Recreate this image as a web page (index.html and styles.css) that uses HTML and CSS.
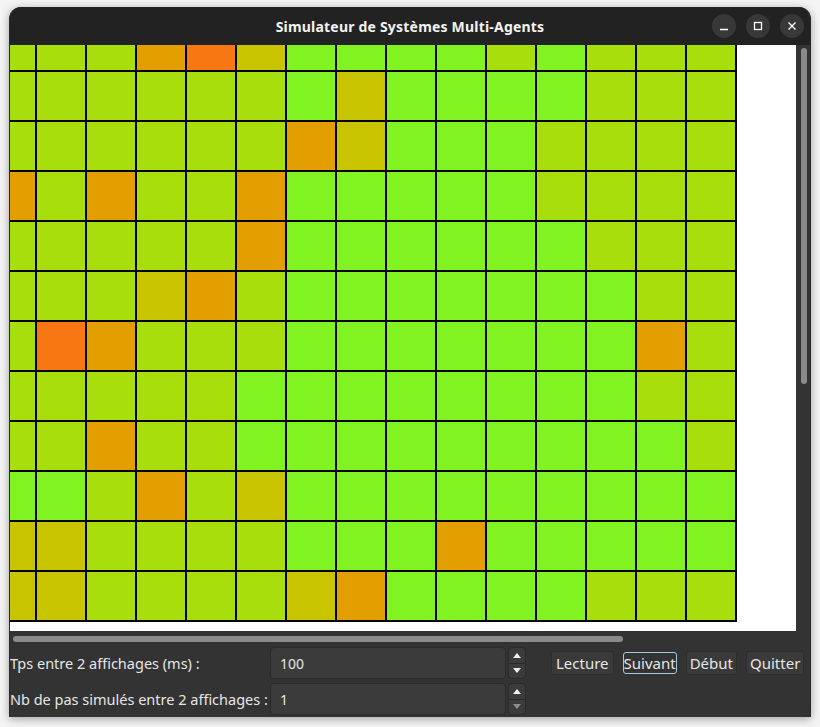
FILE: index.html
```html
<!DOCTYPE html>
<html lang="fr">
<head>
<meta charset="utf-8">
<title>Simulateur de Systèmes Multi-Agents</title>
<link rel="stylesheet" href="styles.css">
</head>
<body>
<div class="window">
  <header class="titlebar">
    <span></span>
    <span class="title">Simulateur de Systèmes Multi-Agents</span>
    <div class="wctrls">
      <span class="wbtn"><svg width="12" height="12" viewBox="0 0 12 12"><path d="M2 9.5h8" stroke="#fff" stroke-width="1.3"/></svg></span>
      <span class="wbtn"><svg width="12" height="12" viewBox="0 0 12 12"><rect x="2.5" y="2.5" width="7" height="7" fill="none" stroke="#fff" stroke-width="1.3"/></svg></span>
      <span class="wbtn"><svg width="12" height="12" viewBox="0 0 12 12"><path d="M2.5 2.5l7 7M9.5 2.5l-7 7" stroke="#fff" stroke-width="1.3"/></svg></span>
    </div>
  </header>
  <div class="main">
    <div class="viewport">
      <div class="board">
        <i class="a"></i><i class="a"></i><i class="a"></i><i class="o"></i><i class="r"></i><i class="y"></i><i class="g"></i><i class="g"></i><i class="g"></i><i class="g"></i><i class="a"></i><i class="g"></i><i class="a"></i><i class="a"></i><i class="a"></i>
        <i class="a"></i><i class="a"></i><i class="a"></i><i class="a"></i><i class="a"></i><i class="a"></i><i class="g"></i><i class="y"></i><i class="g"></i><i class="g"></i><i class="g"></i><i class="g"></i><i class="a"></i><i class="a"></i><i class="a"></i>
        <i class="a"></i><i class="a"></i><i class="a"></i><i class="a"></i><i class="a"></i><i class="a"></i><i class="o"></i><i class="y"></i><i class="g"></i><i class="g"></i><i class="g"></i><i class="a"></i><i class="a"></i><i class="a"></i><i class="a"></i>
        <i class="o"></i><i class="a"></i><i class="o"></i><i class="a"></i><i class="a"></i><i class="o"></i><i class="g"></i><i class="g"></i><i class="g"></i><i class="g"></i><i class="g"></i><i class="a"></i><i class="a"></i><i class="a"></i><i class="a"></i>
        <i class="a"></i><i class="a"></i><i class="a"></i><i class="a"></i><i class="a"></i><i class="o"></i><i class="g"></i><i class="g"></i><i class="g"></i><i class="g"></i><i class="g"></i><i class="g"></i><i class="a"></i><i class="a"></i><i class="a"></i>
        <i class="a"></i><i class="a"></i><i class="a"></i><i class="y"></i><i class="o"></i><i class="a"></i><i class="g"></i><i class="g"></i><i class="g"></i><i class="g"></i><i class="g"></i><i class="g"></i><i class="g"></i><i class="a"></i><i class="a"></i>
        <i class="a"></i><i class="r"></i><i class="o"></i><i class="a"></i><i class="a"></i><i class="a"></i><i class="g"></i><i class="g"></i><i class="g"></i><i class="g"></i><i class="g"></i><i class="g"></i><i class="g"></i><i class="o"></i><i class="a"></i>
        <i class="a"></i><i class="a"></i><i class="a"></i><i class="a"></i><i class="a"></i><i class="g"></i><i class="g"></i><i class="g"></i><i class="g"></i><i class="g"></i><i class="g"></i><i class="g"></i><i class="g"></i><i class="a"></i><i class="a"></i>
        <i class="a"></i><i class="a"></i><i class="o"></i><i class="a"></i><i class="a"></i><i class="g"></i><i class="g"></i><i class="g"></i><i class="g"></i><i class="g"></i><i class="g"></i><i class="g"></i><i class="g"></i><i class="g"></i><i class="a"></i>
        <i class="g"></i><i class="g"></i><i class="a"></i><i class="o"></i><i class="a"></i><i class="y"></i><i class="g"></i><i class="g"></i><i class="g"></i><i class="g"></i><i class="g"></i><i class="g"></i><i class="g"></i><i class="g"></i><i class="g"></i>
        <i class="y"></i><i class="y"></i><i class="a"></i><i class="a"></i><i class="a"></i><i class="a"></i><i class="g"></i><i class="g"></i><i class="g"></i><i class="o"></i><i class="g"></i><i class="g"></i><i class="g"></i><i class="g"></i><i class="g"></i>
        <i class="y"></i><i class="y"></i><i class="a"></i><i class="a"></i><i class="a"></i><i class="a"></i><i class="y"></i><i class="o"></i><i class="g"></i><i class="g"></i><i class="g"></i><i class="g"></i><i class="a"></i><i class="a"></i><i class="a"></i>
      </div>
    </div>
    <div class="vscroll"><div class="vthumb"></div></div>
  </div>
  <div class="hscroll"><div class="hthumb"></div></div>
  <div class="controls">
    <label class="lbl">Tps entre 2 affichages (ms) :</label>
    <div class="spinner">
      <div class="field">100</div>
      <div class="arrows">
        <span class="arr up"></span>
        <span class="arr down"></span>
      </div>
    </div>
    <div class="buttons">
      <span class="btn wide">Lecture</span>
      <span class="btn focus">Suivant</span>
      <span class="btn">Début</span>
      <span class="btn">Quitter</span>
    </div>
    <label class="lbl">Nb de pas simulés entre 2 affichages :</label>
    <div class="spinner">
      <div class="field">1</div>
      <div class="arrows">
        <span class="arr up"></span>
        <span class="arr down off"></span>
      </div>
    </div>
  </div>
</div>
</body>
</html>
```
FILE: styles.css
```css
html, body { margin: 0; padding: 0; }
body {
  background: #f4f4f4;
  width: 820px;
  height: 727px;
  overflow: hidden;
  font-family: "Noto Sans", "DejaVu Sans", sans-serif;
}
.window {
  margin: 7px 0 0 9px;
  width: 800px;
  height: 710px;
  border-left: 1px solid #2a2a2a;
  border-right: 1px solid #2a2a2a;
  border-radius: 12px 12px 0 0;
  background: #333333;
  box-shadow: 0 2px 10px rgba(0,0,0,0.35);
  display: flex;
  flex-direction: column;
  overflow: hidden;
}
.titlebar {
  height: 38px;
  flex: none;
  background: #222222;
  display: grid;
  grid-template-columns: 1fr auto 1fr;
  align-items: center;
  box-sizing: border-box;
}
.title {
  color: #f2f2f2;
  font-weight: bold;
  font-size: 14px;
  letter-spacing: 0.2px;
}
.wctrls {
  justify-self: end;
  display: flex;
  gap: 10px;
  padding-right: 6px;
}
.wbtn {
  width: 24px;
  height: 24px;
  border-radius: 50%;
  background: #383838;
  display: flex;
  align-items: center;
  justify-content: center;
}
.main {
  height: 586px;
  flex: none;
  display: flex;
}
.viewport {
  width: 786px;
  height: 586px;
  background: #ffffff;
  overflow: hidden;
}
.board {
  display: grid;
  grid-template-columns: 25px repeat(14, 48px);
  grid-template-rows: 25px repeat(11, 48px);
  gap: 2px;
  padding: 0 2px 2px 0;
  background: #000;
  width: max-content;
}
.board i { display: block; }
.board .a { background: #a8de0c; }
.board .g { background: #80f320; }
.board .y { background: #c9c400; }
.board .o { background: #e39f00; }
.board .r { background: #f77813; }
.vscroll {
  width: 14px;
  background: #333333;
  padding-top: 3px;
  box-sizing: border-box;
}
.vthumb {
  width: 6px;
  height: 336px;
  margin-left: 5px;
  border-radius: 3px;
  background: #8a8a8a;
}
.hscroll {
  height: 15px;
  flex: none;
  padding: 5px 0 0 3px;
  box-sizing: border-box;
}
.hthumb {
  width: 610px;
  height: 6px;
  border-radius: 3px;
  background: #8a8a8a;
}
.controls {
  padding-top: 1px;
  display: grid;
  grid-template-columns: 260px 256px auto;
  grid-template-rows: 32px 32px;
  row-gap: 4px;
  align-items: center;
  color: #e6e6e6;
  font-size: 14.5px;
}
.lbl { white-space: nowrap; }
.spinner {
  display: flex;
  gap: 2px;
  height: 32px;
}
.field {
  width: 236px;
  box-sizing: border-box;
  border: 1px solid #2a2a2a;
  border-radius: 4px;
  background: #3b3b3b;
  padding-left: 9px;
  display: flex;
  align-items: center;
  font-size: 14px;
}
.arrows {
  width: 18px;
  display: flex;
  flex-direction: column;
  border: 1px solid #2a2a2a;
  border-radius: 4px;
  box-sizing: border-box;
  background: #3b3b3b;
  overflow: hidden;
}
.arr {
  flex: 1;
  display: flex;
  align-items: center;
  justify-content: center;
}
.arr.up { border-bottom: 1px solid #2a2a2a; }
.arr::before {
  content: "";
  width: 0;
  height: 0;
  border-left: 4.5px solid transparent;
  border-right: 4.5px solid transparent;
}
.arr.up::before { border-bottom: 5px solid #f0f0f0; }
.arr.down::before { border-top: 5px solid #f0f0f0; }
.arr.down.off::before { border-top-color: #8c8c8c; }
.buttons {
  display: flex;
  gap: 9px;
  margin-left: 25px;
  align-items: center;
}
.btn {
  height: 24px;
  box-sizing: border-box;
  padding: 0 3px;
  border: 1px solid #2e2e2e;
  border-radius: 3px;
  background: #3a3a3a;
  display: flex;
  align-items: center;
  font-size: 15px;
  color: #e6e6e6;
}
.btn.wide { padding: 0 4px; }
.btn.focus {
  height: 22px;
  padding: 0;
  border: 1px solid #a9c6e4;
  background: #333333;
}
```
